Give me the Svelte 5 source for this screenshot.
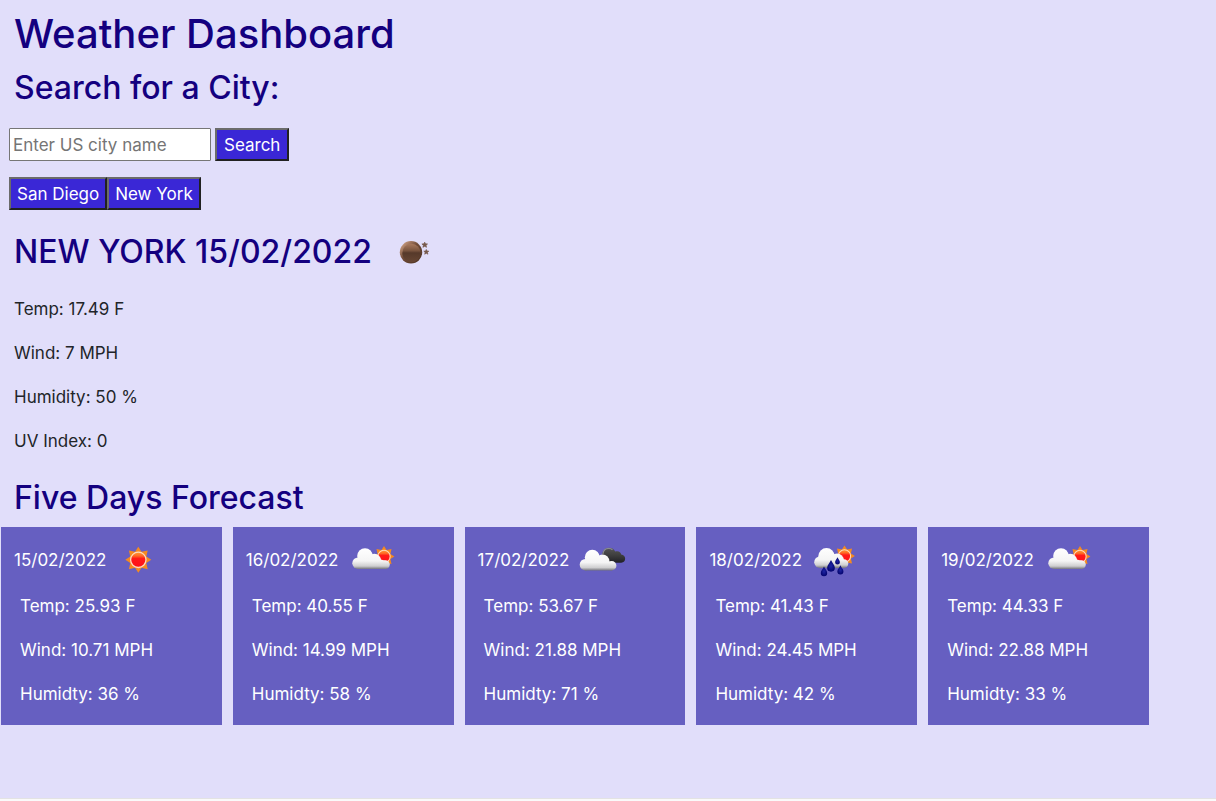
<script>
  let city = $state('');
  const history = ['San Diego', 'New York'];
  const today = { city: 'NEW YORK', date: '15/02/2022', temp: '17.49', wind: '7', humidity: 50, uv: 0 };
  const days = [
    { date: '15/02/2022', icon: 'sun', temp: '25.93', wind: '10.71', humidity: 36 },
    { date: '16/02/2022', icon: 'partly', temp: '40.55', wind: '14.99', humidity: 58 },
    { date: '17/02/2022', icon: 'clouds', temp: '53.67', wind: '21.88', humidity: 71 },
    { date: '18/02/2022', icon: 'rain', temp: '41.43', wind: '24.45', humidity: 42 },
    { date: '19/02/2022', icon: 'partly', temp: '44.33', wind: '22.88', humidity: 33 }
  ];
</script>

{#snippet sun(x, y, scale)}
  <g transform="translate({x} {y}) scale({scale})">
    <path fill="#f58a1f" d="M0-13 3.2-8 9.4-9.4 8-3.2 13 0 8 3.2 9.4 9.4 3.2 8 0 13-3.2 8-9.4 9.4-8 3.2-13 0-8-3.2-9.4-9.4-3.2-8Z" />
    <circle r="7.7" fill="url(#sunFill)" stroke="#ffd9bd" stroke-width="1.3" />
  </g>
{/snippet}

{#snippet drop(x, y, scale)}
  <path transform="translate({x} {y}) scale({scale})" fill="url(#dropFill)" d="M0-5C1-2.5 3.2-.8 3.2 1.5A3.2 3.2 0 0 1-3.2 1.5C-3.2-.8-1-2.5 0-5Z" />
{/snippet}

{#snippet weatherIcon(kind)}
  <svg class="icon" viewBox="0 0 55 55" aria-hidden="true">
    {#if kind === 'moon'}
      <circle cx="25" cy="28.3" r="11.2" fill="url(#moonFill)" />
      <circle cx="25.5" cy="28.9" r="9.2" fill="url(#moonFace)" />
      <path fill="#76594b" stroke="#76594b" stroke-width=".7" d="m38.7 18.2.8 1.6 2 .2-1.5 1.3.5 2-1.8-1-1.8 1 .5-2-1.5-1.3 2-.2ZM40.3 25.5l.7 1.6 1.8.1-1.4 1.2.5 1.8-1.6-1-1.6 1 .5-1.8-1.4-1.2 1.8-.1Z" />
    {:else if kind === 'sun'}
      {@render sun(28.3, 27.8, 1)}
    {:else if kind === 'partly'}
      {@render sun(42, 24.5, 0.8)}
      <g fill="url(#cloudFill)">
        <circle cx="23" cy="24.1" r="7.8" />
        <circle cx="16.1" cy="31.2" r="5.8" />
        <circle cx="32.3" cy="28.6" r="6.8" />
        <circle cx="43.4" cy="32.6" r="4.4" />
        <path d="M16 28 23 23 34 26 44 29V37H16Z" />
      </g>
    {:else if kind === 'clouds'}
      <path fill="url(#darkFill)" d="M30 27c-2.5-5 .4-11.2 6-11.2 3 0 5.2 1.6 6.2 3.8 3.5-1.2 5.6.7 6 3 5.3.4 5.3 8.2 0 8.2H36Z" />
      <path fill="none" stroke="#888b92" stroke-width="1.2" d="M29.9 22c.5-3.8 3-5.6 5.9-5.6 1.4 0 2.7.5 3.7 1.4" />
      <g fill="url(#cloudFill)" transform="translate(0 1.5)">
        <circle cx="19.3" cy="23.8" r="7.5" />
        <circle cx="12.5" cy="31.2" r="5.8" />
        <circle cx="29.6" cy="27.8" r="6.8" />
        <circle cx="38.7" cy="32.3" r="4.7" />
        <path d="M12 29 19 23 31 26 39 29V37H12Z" />
      </g>
    {:else}
      {@render sun(38.5, 24, 0.8)}
      <g fill="url(#cloudFill)" transform="translate(0 -1)">
        <circle cx="20.5" cy="25.2" r="8.2" />
        <circle cx="14" cy="31.2" r="5.8" />
        <circle cx="31" cy="29.3" r="6.9" />
        <circle cx="37.9" cy="32.6" r="4.4" />
        <path d="M14 29 21 23 31 27 38 30V37H14Z" />
      </g>
      {@render drop(31.5, 29, 0.75)}
      {@render drop(25, 34, 1.2)}
      {@render drop(18, 39.5, 1)}
      {@render drop(34.4, 38, 0.95)}
    {/if}
  </svg>
{/snippet}

<svg class="defs" aria-hidden="true">
  <defs>
    <linearGradient id="sunFill" x2="0" y2="1"><stop offset="0" stop-color="#ff9b32" /><stop offset=".25" stop-color="#ff6824" /><stop offset=".42" stop-color="#ff1a18" /><stop offset="1" stop-color="#ff1018" /></linearGradient>
    <linearGradient id="cloudFill" gradientUnits="userSpaceOnUse" x1="0" y1="16" x2="0" y2="37.5"><stop offset="0" stop-color="#fff" /><stop offset=".6" stop-color="#f5f5f5" /><stop offset=".84" stop-color="#cfcfd0" /><stop offset="1" stop-color="#66666e" /></linearGradient>
    <linearGradient id="darkFill" x2="0" y2="1"><stop offset="0" stop-color="#555" /><stop offset=".5" stop-color="#3e3e3e" /><stop offset="1" stop-color="#202026" /></linearGradient>
    <linearGradient id="moonFill" x2="1" y2="1"><stop offset="0" stop-color="#e6b595" /><stop offset=".45" stop-color="#704b38" /><stop offset="1" stop-color="#49301f" /></linearGradient>
    <linearGradient id="moonFace" x2="0" y2="1"><stop offset="0" stop-color="#a97a5e" /><stop offset=".38" stop-color="#79543e" /><stop offset=".5" stop-color="#56392a" /><stop offset="1" stop-color="#674633" /></linearGradient>
    <radialGradient id="dropFill"><stop offset="0" stop-color="#1f26a5" /><stop offset="1" stop-color="#050570" /></radialGradient>
  </defs>
</svg>

<main>
  <h1>Weather Dashboard</h1>
  <h2><label for="city">Search for a City:</label></h2>
  <form onsubmit={(e) => e.preventDefault()}>
    <input id="city" type="text" placeholder="Enter US city name" bind:value={city} />
    <button type="submit">Search</button>
  </form>
  <div class="history">
    {#each history as name}<button type="button" onclick={() => (city = name)}>{name}</button>{/each}
  </div>

  <section class="today">
    <h2>{today.city} {today.date} {@render weatherIcon('moon')}</h2>
    <p>Temp: {today.temp} F</p>
    <p>Wind: {today.wind} MPH</p>
    <p>Humidity: {today.humidity} %</p>
    <p>UV Index: {today.uv}</p>
  </section>

  <h2>Five Days Forecast</h2>
  <section class="forecast">
    {#each days as day}
      <article>
        <header>{day.date} {@render weatherIcon(day.icon)}</header>
        <p>Temp: {day.temp} F</p>
        <p>Wind: {day.wind} MPH</p>
        <p>Humidty: {day.humidity} %</p>
      </article>
    {/each}
  </section>
</main>

<style>
  :global(body) { margin: 0; background: #fafafa; }
  main {
    box-sizing: border-box;
    min-height: calc(100vh - 2px);
    padding-top: 7px;
    border-bottom: 1px solid #e3e3e3;
    background: #e1defa;
    color: #212529;
    font: 400 17px/26px Inter, "Liberation Sans", sans-serif;
  }
  h1, h2 { margin: 0; padding: 0 14px; color: #14007f; font-weight: 500; }
  h1 { font-size: 40px; line-height: 53px; }
  h2 { font-size: 32px; line-height: 42px; }
  h1 + h2 { margin-top: 7px; }
  form { display: flex; gap: 4px; margin: 19px 9px 16px; }
  input, button { box-sizing: border-box; height: 33px; font: inherit; }
  input { width: 202px; padding: 1px 3px; border: 1px solid #767676; border-radius: 1px; background: #fff; }
  input::placeholder { color: #757575; opacity: 1; }
  button { padding: 1px 6px; border: 2px solid; border-color: #6b6b6b #212121 #212121 #6b6b6b; border-radius: 0; background: #3a27d6; color: #fff; }
  form button { padding: 1px 7px; }
  .history { display: flex; margin: 0 9px 14px; }
  p { margin: 0; }
  .today h2 { display: flex; align-items: center; gap: 14px; margin-bottom: 17px; line-height: 55px; }
  .today p { margin-bottom: 18px; padding: 0 14px; }
  .today { margin-bottom: 23px; display: flow-root; }
  .today p:last-child { margin-bottom: 0; }
  .forecast { display: grid; grid-template-columns: repeat(5, 1fr); gap: 11px; margin: 8px 67px 0 1px; }
  article { padding: 5px 13px 18px; background: #665fc1; color: #fff; }
  header { display: flex; align-items: center; gap: 4px; margin-bottom: 6px; }
  article p { padding-left: 6px; }
  article p + p { margin-top: 18px; }
  .icon { flex: none; width: 55px; height: 55px; }
  .defs { position: absolute; width: 0; height: 0; }
</style>
